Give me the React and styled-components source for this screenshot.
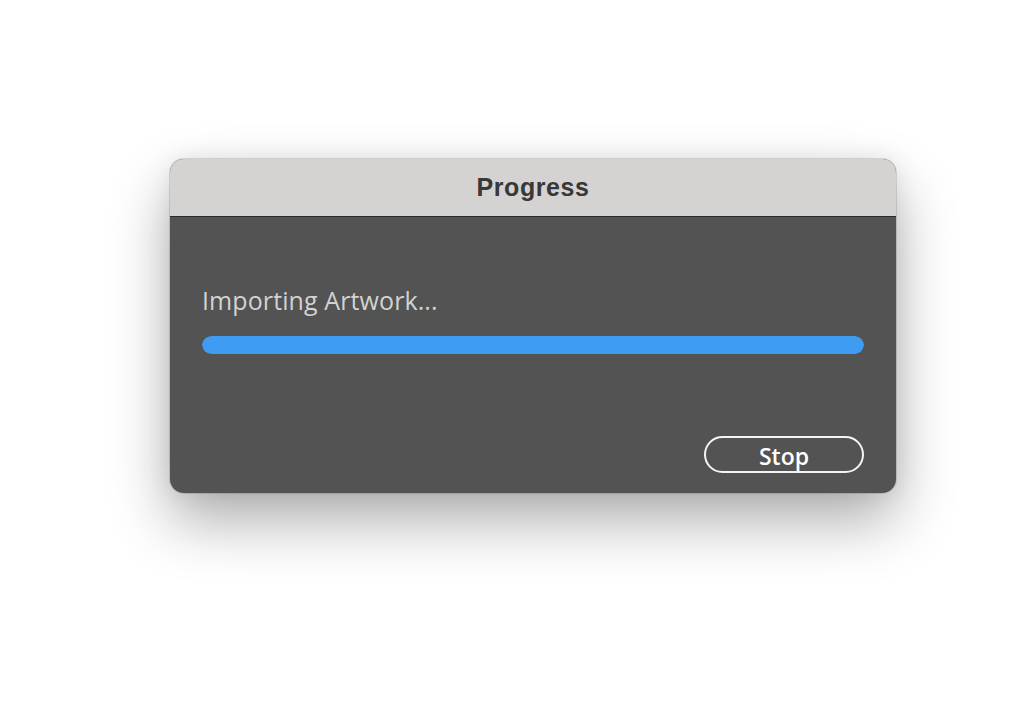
import React from "react";
import styled, { createGlobalStyle } from "styled-components";

const Global = createGlobalStyle`
  html, body { margin: 0; padding: 0; background: #ffffff; }
  body { width: 1030px; height: 720px; overflow: hidden; }
`;

const Page = styled.div`
  display: flex;
  align-items: flex-start;
  padding: 159px 0 0 170px;
  box-sizing: border-box;
  width: 1030px;
  height: 720px;
`;

const Dialog = styled.div`
  width: 726px;
  height: 334px;
  border-radius: 14px;
  background: #535353;
  display: flex;
  flex-direction: column;
  overflow: hidden;
  box-shadow: 0 0 0 1px rgba(0, 0, 0, 0.12), 0 28px 60px rgba(0, 0, 0, 0.32),
    0 0 24px rgba(0, 0, 0, 0.08);
`;

const TitleBar = styled.div`
  height: 58px;
  flex: 0 0 auto;
  background: #d4d3d2;
  border-bottom: 1px solid #2c2c2c;
  display: flex;
  align-items: center;
  justify-content: center;
  font-family: "Liberation Sans", Arial, sans-serif;
  font-weight: 700;
  font-size: 25px;
  letter-spacing: 0.6px;
  color: #383838;
  box-sizing: border-box;
`;

const Body = styled.div`
  flex: 1;
  display: flex;
  flex-direction: column;
  padding: 68px 32px 20px 32px;
`;

const Message = styled.div`
  font-family: "Open Sans", "Noto Sans", sans-serif;
  font-size: 25px;
  line-height: 30px;
  color: #d2d2d2;
  letter-spacing: 0.1px;
`;

const Track = styled.div`
  margin-top: 21px;
  height: 18px;
  border-radius: 9px;
  background: #545454;
  overflow: hidden;
`;

const Fill = styled.div`
  height: 100%;
  border-radius: 9px;
  background: #409cf2;
`;

const Footer = styled.div`
  margin-top: auto;
  display: flex;
  justify-content: flex-end;
`;

const Button = styled.button`
  width: 160px;
  height: 37px;
  border: 2px solid #f4f4f4;
  border-radius: 19px;
  background: transparent;
  color: #ffffff;
  font-family: "Open Sans", "Noto Sans", sans-serif;
  font-weight: 600;
  font-size: 23px;
  line-height: 1;
  padding: 3px 0 0 0;
  box-sizing: border-box;
  display: flex;
  align-items: center;
  justify-content: center;
`;

export default function App() {
  const progress = 100;
  return (
    <>
      <Global />
      <Page>
        <Dialog>
          <TitleBar>Progress</TitleBar>
          <Body>
            <Message>Importing Artwork...</Message>
            <Track>
              <Fill style={{ width: `${progress}%` }} />
            </Track>
            <Footer>
              <Button>Stop</Button>
            </Footer>
          </Body>
        </Dialog>
      </Page>
    </>
  );
}
